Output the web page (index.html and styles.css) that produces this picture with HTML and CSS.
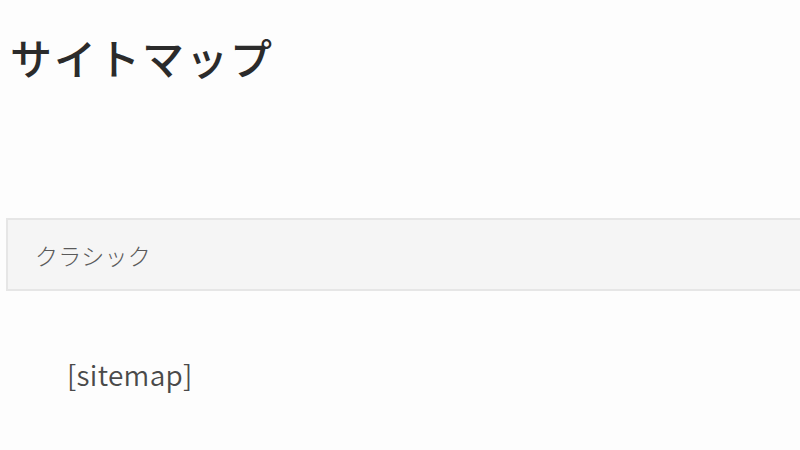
FILE: index.html
```html
<!DOCTYPE html>
<html lang="ja">
<head>
<meta charset="utf-8">
<link rel="stylesheet" href="styles.css">
</head>
<body>
<main class="page">
  <h1 class="title">サイトマップ</h1>
  <div class="tab">クラシック</div>
  <p class="code">[sitemap]</p>
</main>
</body>
</html>
```
FILE: styles.css
```css
html, body {
  margin: 0;
  padding: 0;
  background: #fdfdfd;
}
.page {
  width: 800px;
  height: 450px;
  overflow: hidden;
  padding-left: 6px;
  box-sizing: border-box;
  font-family: "Noto Sans CJK JP", "Noto Sans", sans-serif;
}
.title {
  margin: 0;
  padding: 27px 0 0 4px;
  font-size: 42px;
  line-height: 60px;
  font-weight: 500;
  color: #2b2b2b;
  letter-spacing: 2px;
}
.tab {
  margin-top: 131px;
  width: 820px;
  height: 73px;
  box-sizing: border-box;
  border: 2px solid #e6e6e6;
  background: #f5f5f5;
  padding-left: 27px;
  display: flex;
  align-items: center;
  font-size: 23px;
  font-weight: 300;
  color: #5a5a5a;
  letter-spacing: 0.3px;
}
.code {
  margin: 63px 0 0 61px;
  font-size: 28px;
  line-height: 40px;
  font-weight: 350;
  color: #4a4a4a;
  letter-spacing: 0.3px;
}
```
